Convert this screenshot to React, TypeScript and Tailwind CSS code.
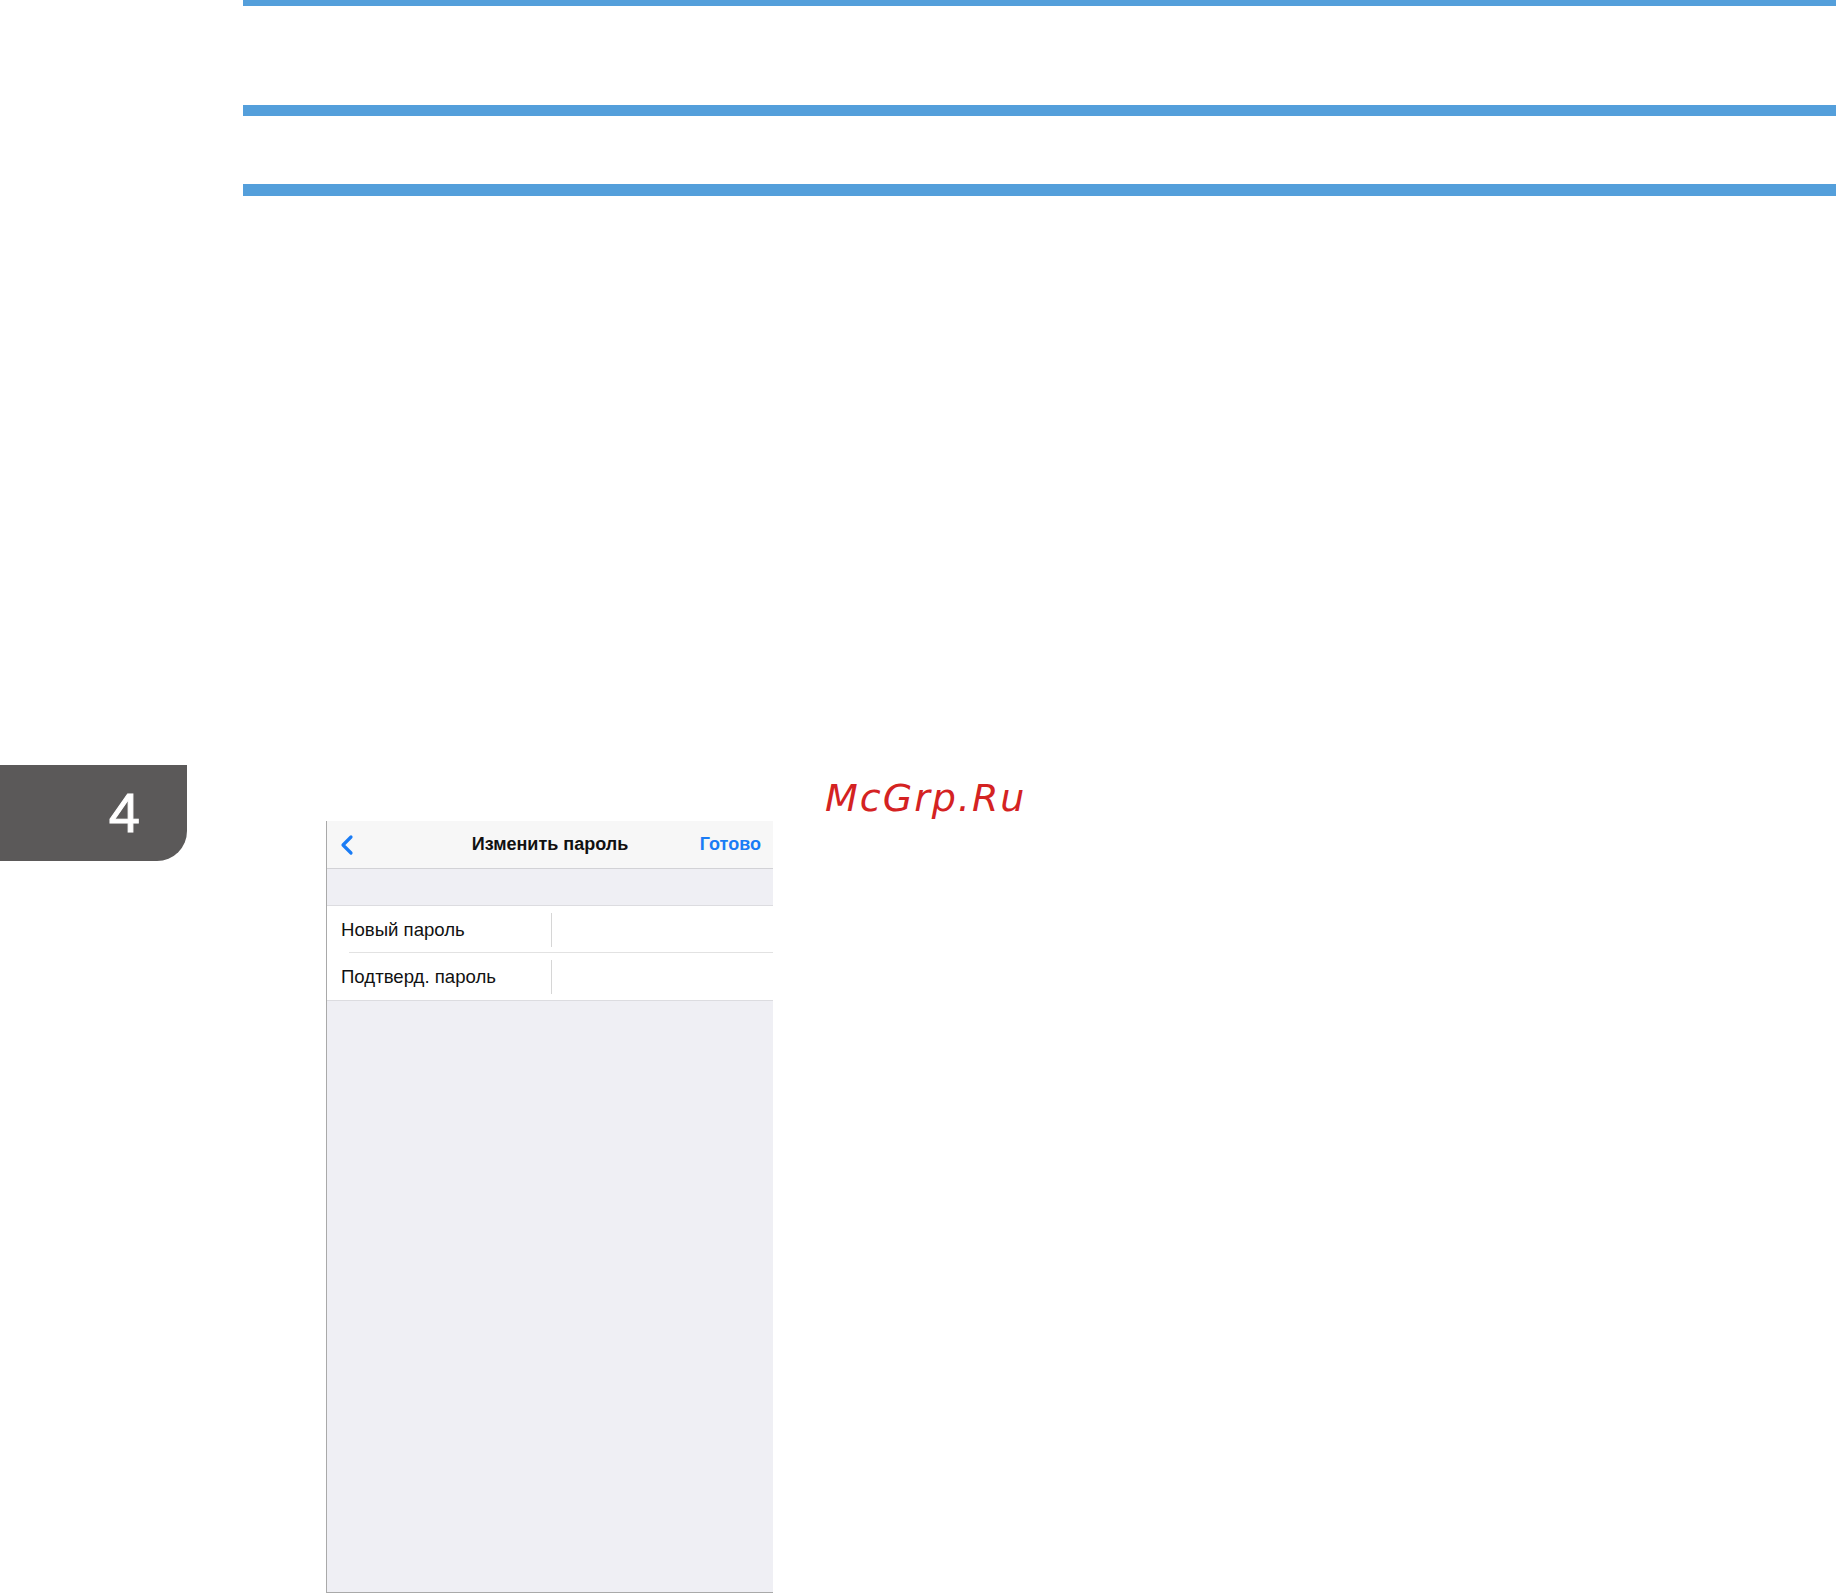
import { ChevronLeft } from "lucide-react";

const Bar = ({ className }: { className: string }) => (
  <div className={`w-full bg-[#549fdb] ${className}`} />
);

const Row = ({ label, last }: { label: string; last?: boolean }) => (
  <div className="relative flex h-[47px] items-center bg-white">
    <div className="w-[224px] pl-[14px] pt-[1px] text-[18.6px] text-[#111]">{label}</div>
    <div className="h-[34px] w-px bg-[#d6d6d6]" />
    {!last && (
      <div className="absolute bottom-0 left-[22px] right-0 h-px bg-[#e2e2e2]" />
    )}
  </div>
);

export default function App() {
  return (
    <div
      className="relative h-[1593px] w-[1836px] overflow-hidden bg-white"
      style={{ fontFamily: '"Liberation Sans", Arial, sans-serif' }}
    >
      {/* header rules */}
      <div className="pl-[243px]">
        <Bar className="h-[6px]" />
        <Bar className="mt-[99px] h-[11px]" />
        <Bar className="mt-[68px] h-[12px]" />
      </div>

      <div className="mt-[569px] flex items-start">
        {/* chapter tab */}
        <div className="flex h-[96px] w-[187px] items-center justify-end rounded-br-[30px] bg-[#5b5959] pr-[47px]">
          <span className="text-[56px] leading-none text-white [-webkit-text-stroke:1px_white]">4</span>
        </div>

        {/* phone screen */}
        <div className="ml-[139px] mt-[56px] flex h-[772px] w-[447px] flex-col border-b border-l border-[#a9a9a9] bg-[#efeff4]">
          <div className="relative flex h-[48px] items-center border-b border-[#d2d2d6] bg-[#f7f7f7]">
            <ChevronLeft className="ml-[4px] h-[32px] w-[32px] text-[#1a7cf5]" strokeWidth={2.4} />
            <div className="absolute inset-x-0 text-center text-[18px] font-bold text-[#111]">
              Изменить пароль
            </div>
            <div className="ml-auto pr-[12px] text-[18px] font-bold text-[#1a7cf5]">
              Готово
            </div>
          </div>
          <div className="h-[37px] border-b border-[#dcdce0]" />
          <div className="border-b border-[#dcdce0]">
            <Row label="Новый пароль" />
            <Row label="Подтверд. пароль" last />
          </div>
        </div>
      </div>

      {/* watermark */}
      <div
        className="absolute left-[825px] top-[770px] text-[38px] italic tracking-[2px] text-[#d42222]"
        style={{ fontFamily: '"DejaVu Sans", sans-serif' }}
      >
        McGrp.Ru
      </div>
    </div>
  );
}
